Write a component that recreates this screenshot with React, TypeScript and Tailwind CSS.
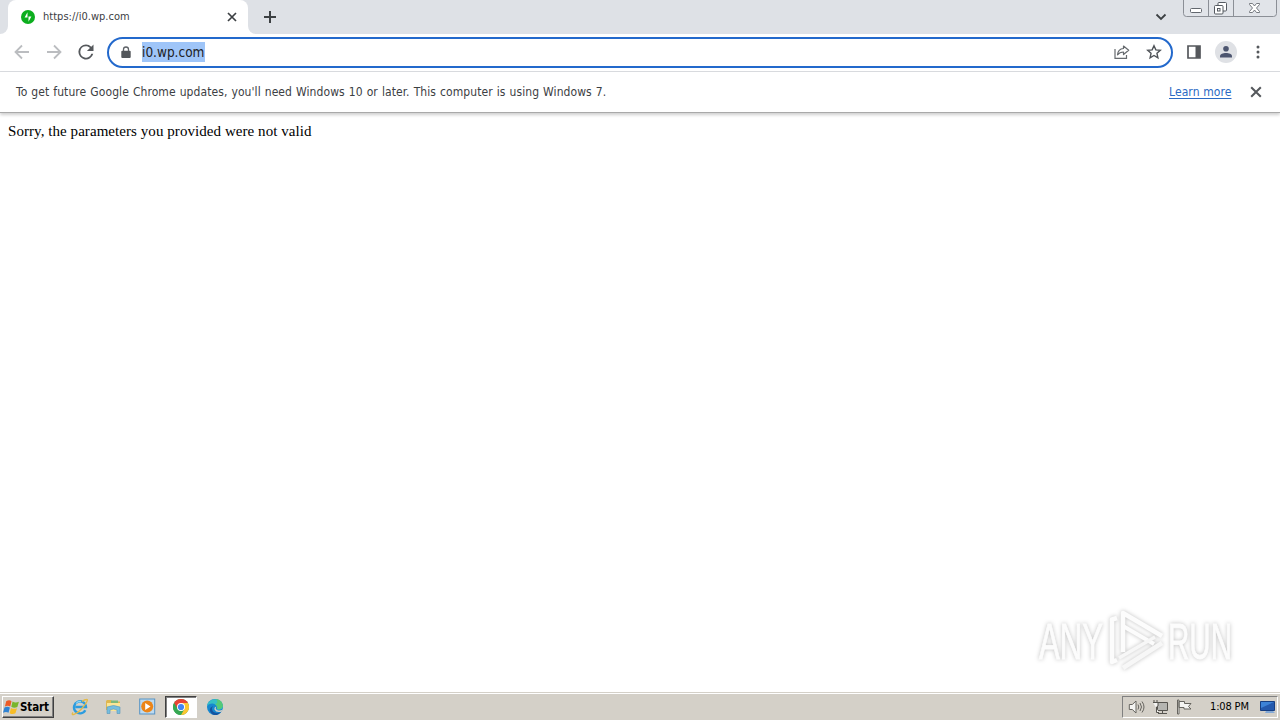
import React from "react";

const ui = "font-['DejaVu_Sans_Condensed','DejaVu_Sans',sans-serif] [font-stretch:condensed]";

function TabFavicon() {
  return (
    <svg className="ml-[13px] h-[14px] w-[14px]" viewBox="0 0 14 14">
      <circle cx="7" cy="7" r="7" fill="#0cae1e" />
      <path d="M6.500 2.200v5.400H3.600zM7.500 11.800V6.400h2.900z" fill="#fff" />
    </svg>
  );
}

function Cross({ className, size, color }: { className?: string; size: number; color: string }) {
  return (
    <svg className={className} width={size} height={size} viewBox="0 0 10 10" stroke={color} strokeWidth="1.7">
      <path d="M1 1l8 8M9 1l-8 8" />
    </svg>
  );
}

function TabStrip() {
  return (
    <div className="flex h-[34px] bg-[#dee1e6]">
      <div className="h-full w-2 bg-white">
        <div className="h-full w-full rounded-br-lg bg-[#dee1e6]" />
      </div>
      <div className="bg-[#dee1e6]">
        <div className="flex h-full w-[240px] items-center rounded-t-lg bg-white">
          <TabFavicon />
          <span className={`${ui} ml-[8px] w-[178px] whitespace-nowrap text-[11px] leading-4 tracking-[0.02px] text-[#3c4043]`}>https://i0.wp.com</span>
          <Cross className="ml-[6px]" size={10} color="#3c4043" />
        </div>
      </div>
      <div className="h-full w-2 bg-white">
        <div className="h-full w-full rounded-bl-lg bg-[#dee1e6]" />
      </div>
      <svg className="ml-[7px] mt-[10px]" width="14" height="14" viewBox="0 0 14 14" stroke="#3c4043" strokeWidth="2">
        <path d="M7 1v12M1 7h12" />
      </svg>
      <svg className="ml-auto mt-[13px]" width="12" height="8" viewBox="0 0 12 8" fill="none" stroke="#3c4043" strokeWidth="1.8">
        <path d="M1.500 1.500L6 6l4.500-4.500" />
      </svg>
      <svg className="ml-4 mr-[3px]" width="94" height="18" viewBox="0 0 94 18" fill="none">
        <path d="M.5 0v13.500q0 3 3 3h87q3 0 3-3V0" fill="#e1e4e9" stroke="#8b8f96" />
        <path d="M25.500 0v16M50.500 0v16" stroke="#8b8f96" />
        <rect x="7.500" y="8.500" width="11" height="4" rx="1" fill="#fff" stroke="#62676e" />
        <rect x="35" y="2.500" width="8.500" height="8.500" rx="1" fill="#fff" stroke="#555a61" />
        <rect x="31.500" y="5.500" width="8.500" height="8.500" rx="1" fill="#fff" stroke="#555a61" />
        <rect x="34.500" y="8.500" width="2.500" height="2.500" stroke="#555a61" />
        <path d="M66.500 3.500h3l2 2.500 2-2.500h3v1L73.500 8l3 3.500v1h-3l-2-2.500-2 2.500h-3v-1l3-3.500-3-3.500z" fill="#fff" stroke="#696d74" strokeWidth=".9" />
      </svg>
    </div>
  );
}

function Arrow({ back }: { back?: boolean }) {
  return (
    <svg className={back ? "-mt-px ml-[14px]" : "-mt-px ml-4"} width="16" height="16" viewBox="0 0 16 16" fill="none" stroke="#bbbdc0" strokeWidth="1.8">
      <path d={back ? "M15 8H2M8 1.500L1.500 8 8 14.500" : "M1 8h13M8 1.500L14.500 8 8 14.500"} />
    </svg>
  );
}

function Toolbar() {
  return (
    <div className="flex h-[38px] items-center border-b border-[#dadce0] bg-white">
      <Arrow back />
      <Arrow />
      <svg className="-mt-px ml-4" width="16" height="16" viewBox="4 4 16 16" fill="#55585c">
        <path d="M17.650 6.350A7.950 7.950 0 0 0 12 4a8 8 0 1 0 7.730 10h-2.080A6 6 0 1 1 12 6c1.660 0 3.140.69 4.220 1.780L13 11h7V4z" transform="translate(.7 .7) scale(.94)" />
      </svg>
      <div className="ml-[13px] flex h-[31px] w-[1066px] items-center rounded-full border-2 border-[#2369cc] bg-white">
        <svg className="ml-[12px]" width="10" height="13" viewBox="0 0 10 13">
          <path d="M2.500 6V3.500a2.500 2.500 0 0 1 5 0V6" fill="none" stroke="#5f6368" strokeWidth="1.300" />
          <rect x=".3" y="4.700" width="9.400" height="7.300" rx="1" fill="#53575b" />
        </svg>
        <span className={`${ui} -mt-px ml-[11px] h-[20px] w-[63px] whitespace-nowrap bg-[#9fc5f8] text-[13.500px] leading-[21px] text-[#202124]`}>i0.wp.com</span>
        <svg className="-mt-px ml-auto" width="16" height="16" viewBox="0 0 16 16" fill="none" stroke="#666a6e" strokeWidth="1.200">
          <path d="M1 5v9.400h11.500V11" />
          <path d="M9.500 2l5.200 4.300-5.200 4.200V8c-2.800 0-4.500.8-6 2.800.3-3.800 2.500-6 6-6.300z" strokeLinejoin="round" />
        </svg>
        <svg className="-mt-px ml-4 mr-[9px]" width="16" height="16" viewBox="0 0 16 16" fill="none" stroke="#4e5257" strokeWidth="1.400">
          <path d="M8 1.800l1.850 4.100 4.450.45-3.350 3 .95 4.400L8 11.500l-3.900 2.250.95-4.400-3.350-3 4.450-.45z" />
        </svg>
      </div>
      <svg className="-mt-px ml-[14px]" width="14" height="14" viewBox="0 0 14 14">
        <path d="M1 1h12v12H1z" fill="none" stroke="#55585c" strokeWidth="1.700" />
        <path d="M8.500 1H13v12H8.500z" fill="#55585c" />
      </svg>
      <svg className="-mt-px ml-[14px]" width="22" height="22" viewBox="0 0 22 22">
        <circle cx="11" cy="11" r="11" fill="#dfe1e5" />
        <circle cx="11" cy="7.800" r="2.800" fill="#4c556f" />
        <path d="M5 16.500v-1.300c0-2 3-3.200 6-3.200s6 1.200 6 3.200v1.300z" fill="#4c556f" />
      </svg>
      <svg className="-mt-px ml-[19px]" width="4" height="14" viewBox="0 0 4 14" fill="#55585c">
        <circle cx="2" cy="2" r="1.500" /><circle cx="2" cy="7" r="1.500" /><circle cx="2" cy="12" r="1.500" />
      </svg>
    </div>
  );
}

function InfoBar() {
  return (
    <div className={`${ui} z-10 flex h-[41px] items-center border-b border-[#a9a9a9] bg-white pl-4 text-[12px] text-[#3c4043] shadow-[0_2px_3px_#00000030]`}>
      <span className="whitespace-nowrap tracking-[0.08px] [word-spacing:0.5px]">To get future Google Chrome updates, you'll need Windows 10 or later. This computer is using Windows 7.</span>
      <span className="ml-auto w-[63px] whitespace-nowrap tracking-[0.1px] text-[#2a69c4] underline underline-offset-2">Learn more</span>
      <Cross className="ml-[18px] mr-[18px]" size={12} color="#55585c" />
    </div>
  );
}

function Watermark() {
  return (
    <svg className="absolute left-[1030px] top-[604px] overflow-visible [filter:drop-shadow(0_0_2px_#00000040)]" width="220" height="74" viewBox="1030 604 220 74">
      <g fill="none" stroke="#fcfcfc" strokeWidth="4.500" strokeLinejoin="round">
        <path d="M1117 618l-5 1.500V662l5-2" />
        <path d="M1123 652v-39l39 23" />
        <path d="M1123 626l31 18" strokeWidth="4" />
        <path d="M1123 668l39-25" stroke="#f7f7f7" />
        <path d="M1119 658l36-21" stroke="#f7f7f7" strokeWidth="3.500" />
      </g>
      <g fill="#fcfcfc" stroke="#fcfcfc" strokeWidth=".8" fontFamily="Liberation Sans Narrow, Liberation Sans, sans-serif" fontSize="50">
        <text x="1039" y="659" textLength="64" lengthAdjust="spacingAndGlyphs">ANY</text>
        <text x="1168" y="659" textLength="64" lengthAdjust="spacingAndGlyphs">RUN</text>
      </g>
    </svg>
  );
}

function StartFlag() {
  return (
    <svg className="shrink-0" width="17" height="17" viewBox="0 0 16 16">
      <path d="M3 2q3-1.500 5 0L6.800 7q-2.300-1.500-5 0z" fill="#ed5b26" />
      <path d="M9 2.300q2.500 1.700 6 .2l-1.500 5Q10.500 9 7.800 7.300z" fill="#79b52c" />
      <path d="M1.400 8q2.700-1.500 5.100 0l-1.300 5Q3 11.500 0 13z" fill="#3083d3" />
      <path d="M7.500 8.400q2.700 1.600 5.700.2L11.700 13.500q-2.700 1.500-5.400-.1z" fill="#f7bd27" />
    </svg>
  );
}

function Taskbar() {
  return (
    <div className={`${ui} flex h-[28px] items-center border-t border-[#d4d0c8] bg-[#d4d0c8] text-black shadow-[inset_0_1px_0_#fff]`}>
      <div className="ml-[2px] mt-px flex h-[22px] w-[52px] items-center border border-b-[#404040] border-l-white border-r-[#404040] border-t-white shadow-[inset_-1px_-1px_0_#808080]">
        <StartFlag />
        <span className="text-[11.500px] font-bold leading-4 tracking-[-0.1px]">Start</span>
      </div>
      <svg className="ml-[17px]" width="18" height="18" viewBox="0 0 18 18" fill="none">
        <path d="M14.300 12.200A6 6 0 1 1 15 9H4.500" stroke="#2c9cdf" strokeWidth="2.400" />
        <path d="M5 5.500Q7 3 10 3.500" stroke="#8bd5f6" strokeWidth="1.200" />
        <path d="M2 14.500C-1 18 5 17 10 11.500S18 1 15.500 1.500Q13.500 1.500 11 3.500" stroke="#e5ba45" strokeWidth="1.300" />
      </svg>
      <svg className="ml-4" width="17" height="17" viewBox="0 0 17 17">
        <path d="M1 3l1-1h4l1.500 1.500H15V12H1z" fill="#dfb750" />
        <path d="M2 5h13v8H2z" fill="#fbe596" /><path d="M6 2.500h7V5H6z" fill="#7db979" />
        <path d="M2 9q6.500-3 13 0v6.500h-3V12q-3.500-2-7 0v3.500H2z" fill="#75bedf" stroke="#5796b9" strokeWidth=".6" />
      </svg>
      <svg className="ml-[17px]" width="17" height="17" viewBox="0 0 17 17">
        <rect x=".7" y="1" width="15" height="15" fill="#bddaf0" stroke="#5793c4" />
        <circle cx="8.200" cy="8.500" r="6" fill="#ec8518" /><path d="M6.200 5l5.300 3.500-5.300 3.500z" fill="#fff" />
      </svg>
      <div className="ml-[9px] flex h-[22px] w-[32px] items-center justify-center border border-b-white border-l-[#404040] border-r-white border-t-[#404040] bg-white shadow-[inset_1px_1px_0_#808080]">
        <svg width="16" height="16" viewBox="0 0 16 16">
          <circle cx="8" cy="8" r="8" fill="#36a853" />
          <path d="M8 8L1.070 4A8 8 0 0 1 14.930 4z" fill="#e94335" />
          <path d="M8 4h6.930A8 8 0 0 1 8 16l3.500-6z" fill="#fcc631" />
          <path d="M1.070 4L4.540 10 8 8V4z" fill="#e94335" />
          <path d="M1.070 4L4.540 10 8 16A8 8 0 0 1 1.070 4z" fill="#36a853" />
          <circle cx="8" cy="8" r="4" fill="#fff" /><circle cx="8" cy="8" r="3.100" fill="#4285f4" />
        </svg>
      </div>
      <svg className="ml-[10px]" width="16" height="16" viewBox="0 0 16 16">
        <circle cx="8" cy="8" r="8" fill="#1687cf" />
        <path d="M0 7C1-1 14-3 16 7c0 3-3 4.500-6 3.500-1-.5 1-1 0-3C8 3 2 4 0 7z" fill="#36bfc5" />
        <path d="M9 0q6.500 1 7 7-1 3-4 3.200-2-.1-2-.8 1-3-2-4Q12 4 9 0z" fill="#55c979" />
        <path d="M6 7c-3 4 1 9 8 6Q10 18 5 15 0 10 6 7z" fill="#1554a0" />
        <path d="M9.500 7.500q-2 2.500 1 3.800 3 .9 5.500-1l-1.600 2.400Q9 14 7.500 10.500 7 8 9.500 7.500z" fill="#d4d0c8" />
      </svg>
      <div className="ml-auto mr-[2px] mt-px flex h-[22px] w-[156px] items-center border border-b-white border-l-[#808080] border-r-white border-t-[#808080]">
        <svg className="ml-[5px] shrink-0" width="18" height="16" viewBox="0 0 17 16" fill="#f4f4f2" stroke="#66645f">
          <path d="M.8 5.500h3L7.500 2v12L3.800 10.500h-3z" />
          <path d="M9.500 5.500q1.500 2.500 0 5M11.500 4q3 4 0 8M13.500 2.500q4 5.500 0 11" fill="none" />
        </svg>
        <svg className="ml-[6px] shrink-0" width="17" height="16" viewBox="0 0 17 16" fill="#f4f4f2" stroke="#56544f">
          <path d="M5.500 3.500h10v8h-10z" fill="#b5b5b1" /><path d="M6 14.500h9M10.500 12v2" />
          <path d="M1 3.500h5V7L4.500 8v5.500H7M2 1v2.500M5 1v2.500" />
        </svg>
        <svg className="ml-[7px] shrink-0" width="17" height="16" viewBox="0 0 17 16" fill="#f4f4f2" stroke="#66645f">
          <path d="M1.500 1h1.500v14H1.500zM3 2.500h5.500v2H15l-2.500 3L15 10H8V8.500H3z" />
        </svg>
        <span className="ml-[17px] w-[42px] shrink-0 whitespace-nowrap text-[11px] leading-4 tracking-[-0.15px]">1:08 PM</span>
        <svg className="ml-[8px] shrink-0" width="16" height="14" viewBox="0 0 16 14">
          <path d="M.5 1.500h14v9H.5z" fill="#2459ad" stroke="#173f82" /><path d="M1 2h13L1 8z" fill="#3d83d7" />
          <path d="M6 11h7l2 2H5z" fill="#84a9d6" />
        </svg>
      </div>
    </div>
  );
}

export default function App() {
  return (
    <div className="relative flex h-[720px] w-[1280px] flex-col overflow-hidden bg-white">
      <TabStrip />
      <Toolbar />
      <InfoBar />
      <main className="flex-1 px-2 pt-[9px] font-['Liberation_Serif',serif] text-[15px] leading-[19px] text-black">
        <p className="whitespace-nowrap tracking-[0.06px]">Sorry, the parameters you provided were not valid</p>
      </main>
      <Taskbar />
      <Watermark />
    </div>
  );
}
